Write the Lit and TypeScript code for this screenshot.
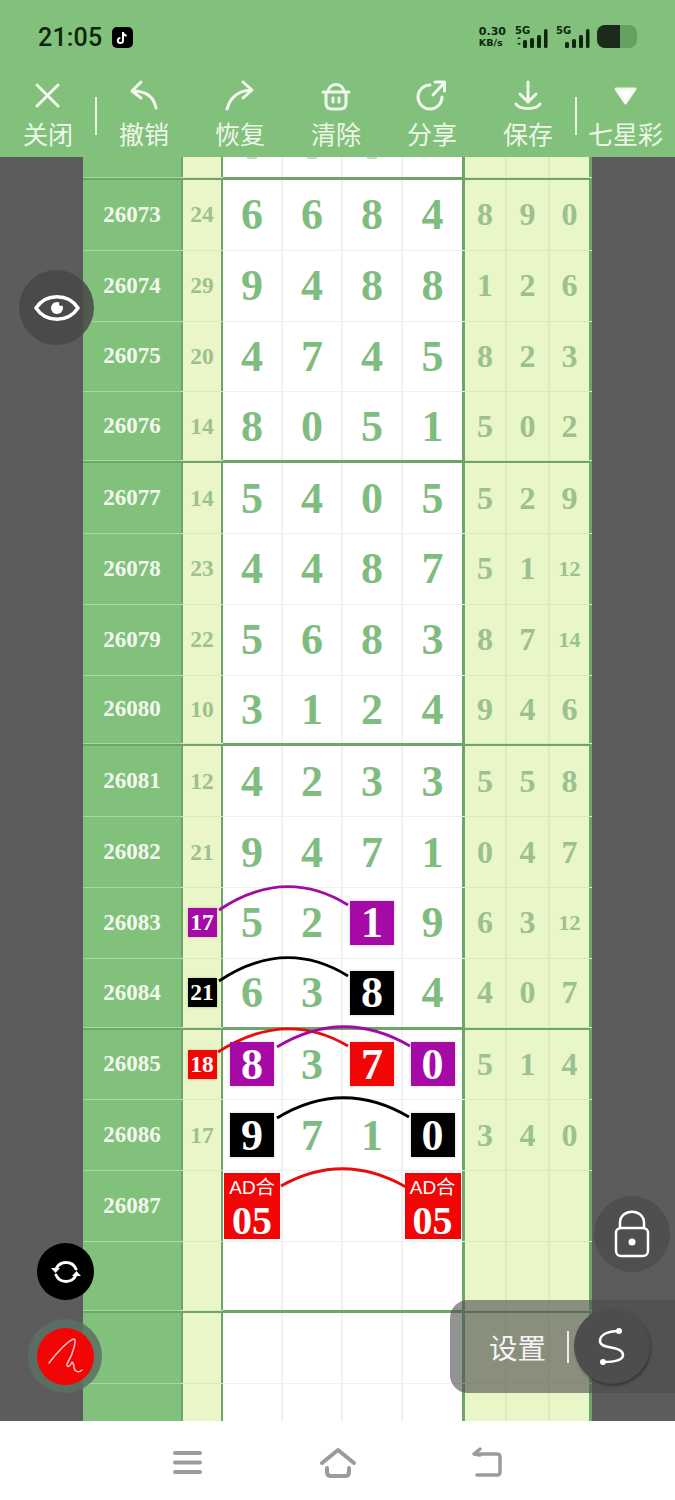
import { LitElement, css, html, svg } from "lit";
import { customElement } from "lit/decorators.js";

type Mark = "" | "p" | "k" | "r";
type Row = { no: string; sum: string; main: string[]; extra: string[]; sumMark?: Mark; marks?: Mark[]; ad?: boolean };

const rows: Row[] = [
  { no: "26073", sum: "24", main: ["6", "6", "8", "4"], extra: ["8", "9", "0"] },
  { no: "26074", sum: "29", main: ["9", "4", "8", "8"], extra: ["1", "2", "6"] },
  { no: "26075", sum: "20", main: ["4", "7", "4", "5"], extra: ["8", "2", "3"] },
  { no: "26076", sum: "14", main: ["8", "0", "5", "1"], extra: ["5", "0", "2"] },
  { no: "26077", sum: "14", main: ["5", "4", "0", "5"], extra: ["5", "2", "9"] },
  { no: "26078", sum: "23", main: ["4", "4", "8", "7"], extra: ["5", "1", "12"] },
  { no: "26079", sum: "22", main: ["5", "6", "8", "3"], extra: ["8", "7", "14"] },
  { no: "26080", sum: "10", main: ["3", "1", "2", "4"], extra: ["9", "4", "6"] },
  { no: "26081", sum: "12", main: ["4", "2", "3", "3"], extra: ["5", "5", "8"] },
  { no: "26082", sum: "21", main: ["9", "4", "7", "1"], extra: ["0", "4", "7"] },
  { no: "26083", sum: "17", sumMark: "p", main: ["5", "2", "1", "9"], marks: ["", "", "p", ""], extra: ["6", "3", "12"] },
  { no: "26084", sum: "21", sumMark: "k", main: ["6", "3", "8", "4"], marks: ["", "", "k", ""], extra: ["4", "0", "7"] },
  { no: "26085", sum: "18", sumMark: "r", main: ["8", "3", "7", "0"], marks: ["p", "", "r", "p"], extra: ["5", "1", "4"] },
  { no: "26086", sum: "17", main: ["9", "7", "1", "0"], marks: ["k", "", "", "k"], extra: ["3", "4", "0"] },
  { no: "26087", sum: "", main: ["05", "", "", "05"], ad: true, extra: ["", "", ""] },
  { no: "", sum: "", main: ["", "", "", ""], extra: ["", "", ""] },
  { no: "", sum: "", main: ["", "", "", ""], extra: ["", "", ""] },
  { no: "", sum: "", main: ["", "", "", ""], extra: ["", "", ""] },
];

// arcs joining the marked numbers, in page coordinates
const arcs = [
  { d: "M219 910 Q285 866 348 905", c: "#a30aa3" },
  { d: "M219 981 Q285 937 348 976", c: "#000" },
  { d: "M218 1052 Q285 1009 348 1046", c: "#e80c0c" },
  { d: "M277 1047 Q343 1007 410 1046", c: "#a30aa3" },
  { d: "M277 1118 Q343 1078 409 1117", c: "#000" },
  { d: "M281 1186 Q343 1151 406 1187", c: "#e80c0c" },
];

const tools = [
  { label: "关闭", icon: svg`<path d="M6 6 27 27M27 6 6 27"/>` },
  { label: "撤销", icon: svg`<path d="M29 29C27 19 20 12 6 12M14 3 5 12l9 7"/>`, sep: true },
  { label: "恢复", icon: svg`<path d="M4 30C7 19 14 12 28 11M20 3l9 8-9 8"/>` },
  { label: "清除", icon: svg`<path d="M4 13h26M7 13v11q0 6 6 6h8q6 0 6-6V13M9 13C10 3 24 3 25 13M14 19v4M20 19v4"/>` },
  { label: "分享", icon: svg`<path d="M27 18A12 12 0 1 1 15 6M18 16 29 4M20 3h9.5v9"/>` },
  { label: "保存", icon: svg`<path d="M17 3v19M9 15l8 8 8-8M5 25c4 6 20 6 24 0"/>` },
  { label: "七星彩", icon: svg`<path d="M7 10h19L16.5 24Z" fill="#fff" stroke-linejoin="round"/>`, sep: true },
];

@customElement("app-root")
export class AppRoot extends LitElement {
  static styles = css`
    :host {
      display: block;
      width: 675px;
      height: 1500px;
      position: relative;
      overflow: hidden;
      background: #fff;
      font-family: "Liberation Serif", serif;
    }
    .top {
      height: 157px;
      background: #82c17b;
      display: flex;
      flex-direction: column;
    }
    .status {
      height: 74px;
      display: flex;
      align-items: center;
      padding: 0 37px 0 38px;
      color: #0d260d;
    }
    .time {
      font: 500 25px Roboto, sans-serif;
      letter-spacing: 0.2px;
    }
    .tiktok {
      margin-left: 10px;
      width: 21px;
      height: 21px;
    }
    .right {
      margin-left: auto;
      display: flex;
      align-items: center;
    }
    .speed {
      font: 700 11px/11px "DejaVu Sans", sans-serif;
      text-align: left;
      margin-right: 9px;
    }
    .speed span {
      display: block;
      font-size: 9.5px;
    }
    .net {
      width: 34px;
      height: 24px;
      margin-right: 7px;
    }
    .batt {
      width: 41px;
      height: 24px;
    }
    .tools {
      display: flex;
      height: 83px;
    }
    .tool {
      width: 96px;
      display: flex;
      flex-direction: column;
      align-items: center;
      color: #eef7ea;
      font: 400 25px/34px "Noto Sans CJK SC", sans-serif;
    }
    .tool svg {
      width: 34px;
      height: 34px;
      margin-top: 5px;
      margin-bottom: 3px;
      fill: none;
      stroke: #f1f8ee;
      stroke-width: 3;
      stroke-linecap: round;
      stroke-linejoin: round;
    }
    .sep {
      width: 2px;
      height: 38px;
      margin: 23px -1px 0;
      background: #e8f4e4;
    }
    .tool.last {
      width: 99px;
    }
    .main {
      height: 1264px;
      background: #5c5c5c;
      padding: 0 83px;
      position: relative;
      overflow: hidden;
    }
    .row {
      display: grid;
      grid-template-columns: 98px 42px 60px 60px 60px 62px 42px 43px 42px;
      height: 70.8px;
      box-sizing: border-box;
      border-bottom: 1px solid #efefef;
    }
    .row.major {
      border-bottom: 3px solid #6fa56a;
    }
    .row.stub {
      height: 23px;
    }
    .tick {
      width: 10px;
      height: 2px;
      background: #c4dcc2;
      align-self: flex-start;
    }
    .cell {
      display: flex;
      align-items: center;
      justify-content: center;
      box-sizing: border-box;
    }
    .no {
      background: #82c17b;
      color: #f2f8ee;
      font-weight: 700;
      font-size: 23px;
      box-shadow: 0 1px 0 #a8d8a2;
    }
    .sum {
      background: #ebf6c8;
      border-left: 2px solid #6fa56a;
      border-right: 2px solid #6fa56a;
      color: #9cc08e;
      font-weight: 700;
      font-size: 23.5px;
      box-shadow: 0 1px 0 #dde9bd;
    }
    .num {
      background: #fff;
      color: #7fbc7f;
      font-weight: 700;
      font-size: 44px;
      border-right: 2px solid #f0f0f0;
    }
    .num.end {
      border-right: 3px solid #6fa56a;
    }
    .more {
      background: #e9f6c8;
      color: #9cc08e;
      font-weight: 700;
      font-size: 32px;
      border-right: 2px solid #dcebb8;
      box-shadow: 0 1px 0 #dce9bb;
    }
    .more.small {
      font-size: 22px;
    }
    .more.end {
      border-right: 3px solid #6fa56a;
    }
    .box {
      position: relative;
      z-index: 2;
      width: 44px;
      height: 44px;
      display: flex;
      align-items: center;
      justify-content: center;
      color: #fff;
      box-shadow: 0 0 3px rgba(0, 0, 0, 0.2);
    }
    .box.tiny {
      width: 29px;
      height: 29px;
    }
    .p {
      background: #a60aa6;
    }
    .k {
      background: #000;
    }
    .r {
      background: #f20505;
    }
    .ad {
      position: relative;
      z-index: 2;
      flex: none;
      width: 56px;
      height: 66px;
      background: #f20505;
      color: #fff;
      display: flex;
      flex-direction: column;
      align-items: center;
      font-size: 40px;
      line-height: 40px;
    }
    .ad span {
      font: 400 19px/26px "Liberation Sans", "Noto Sans CJK SC", sans-serif;
      margin-top: 2px;
    }
    .arcs {
      position: absolute;
      left: 0;
      top: -157px;
      width: 675px;
      height: 1500px;
      z-index: 1;
      fill: none;
      stroke-width: 2.8;
      pointer-events: none;
    }
    .nav {
      height: 79px;
      background: #fff;
    }
    .nav svg {
      display: block;
      width: 675px;
      height: 79px;
      fill: none;
      stroke: #9b9b9b;
      stroke-width: 4;
      stroke-linecap: round;
      stroke-linejoin: round;
    }
    .round {
      position: absolute;
      z-index: 5;
      border-radius: 50%;
      display: flex;
      align-items: center;
      justify-content: center;
      box-sizing: border-box;
    }
    .round svg {
      fill: none;
      stroke: #fff;
      stroke-linecap: round;
      stroke-linejoin: round;
    }
    .eye {
      left: 19px;
      top: 270px;
      width: 75px;
      height: 75px;
      background: rgba(70, 70, 70, 0.85);
    }
    .lock {
      left: 594px;
      top: 1196px;
      width: 76px;
      height: 76px;
      background: #4f4f4f;
    }
    .sync {
      left: 37px;
      top: 1243px;
      width: 57px;
      height: 57px;
      background: #000;
    }
    .pen {
      left: 28px;
      top: 1319px;
      width: 74px;
      height: 74px;
      background: rgba(90, 112, 100, 0.85);
    }
    .pen div {
      width: 57px;
      height: 57px;
      border-radius: 50%;
      background: #f20505;
      display: flex;
      align-items: center;
      justify-content: center;
    }
    .round.pen svg {
      stroke: #ffc8c8;
    }
    .panel {
      position: absolute;
      z-index: 4;
      left: 450px;
      top: 1300px;
      width: 225px;
      height: 93px;
      border-radius: 18px 0 0 18px;
      background: rgba(75, 75, 75, 0.6);
      display: flex;
      align-items: center;
      color: #f4f4f4;
      font: 400 28.5px "Noto Sans CJK SC", sans-serif;
      padding-left: 39px;
      box-sizing: border-box;
    }
    .panel i {
      width: 2px;
      height: 32px;
      margin-left: 21px;
      background: #ececec;
    }
    .swoosh {
      left: 574px;
      top: 1308px;
      width: 76px;
      height: 76px;
      background: #4d4d4d;
      box-shadow: 1px 2px 3px rgba(0, 0, 0, 0.35);
    }
  `;

  private number(value: string, r: Row, i: number) {
    const mark = r.marks?.[i];
    if (r.ad && value) return html`<div class="ad"><span>AD合</span>${value}</div>`;
    return mark ? html`<div class="box ${mark}">${value}</div>` : value;
  }

  private renderRow(r: Row, index: number) {
    return html`
      <div class="row ${index % 4 === 3 ? "major" : ""}">
        <div class="cell no">${r.no}</div>
        <div class="cell sum">
          ${r.sumMark ? html`<div class="box tiny ${r.sumMark}">${r.sum}</div>` : r.sum}
        </div>
        ${r.main.map((v, i) => html`<div class="cell num ${i === 3 ? "end" : ""}">${this.number(v, r, i)}</div>`)}
        ${r.extra.map(
          (v, i) => html`<div class="cell more ${v.length > 1 ? "small" : ""} ${i === 2 ? "end" : ""}">${v}</div>`
        )}
      </div>
    `;
  }

  // the row scrolled away under the toolbar: only the feet of its digits still show
  private renderStub() {
    return html`
      <div class="row major stub">
        <div class="cell no"></div>
        <div class="cell sum"></div>
        ${[0, 1, 2, 3].map(
          (i) => html`<div class="cell num ${i === 3 ? "end" : ""}">${i < 3 ? html`<div class="tick"></div>` : ""}</div>`
        )}
        ${[0, 1, 2].map((i) => html`<div class="cell more ${i === 2 ? "end" : ""}"></div>`)}
      </div>
    `;
  }

  render() {
    return html`
      <div class="top">
        <div class="status">
          <span class="time">21:05</span>
          <svg class="tiktok" viewBox="0 0 21 21">
            <rect width="21" height="21" rx="5" fill="#000"/>
            <path d="M11 5v8.5a2.6 2.6 0 1 1-2.6-2.6M11 5.5c.4 2 1.800 3 3.600 3.200" fill="none" stroke="#fff" stroke-width="2"/>
          </svg>
          <div class="right">
            <div class="speed">0.30<span>KB/s</span></div>
            <svg class="net" viewBox="0 0 34 24" fill="#0d260d">
              <text x="0" y="9" font-family="DejaVu Sans" font-weight="700" font-size="10">5G</text>
              <path d="M2 14l2-2 2 2ZM2 18h4l-2 2Z"/>
              <rect x="8" y="15" width="4" height="8" rx="1.500"/>
              <rect x="15" y="13" width="4" height="10" rx="1.500"/>
              <rect x="22" y="10" width="4" height="13" rx="1.500"/>
              <rect x="29" y="4" width="3.500" height="19" rx="1.500"/>
            </svg>
            <svg class="net" viewBox="0 0 34 24" fill="#0d260d">
              <text x="0" y="9" font-family="DejaVu Sans" font-weight="700" font-size="10">5G</text>
              <rect x="9" y="17" width="4" height="6" rx="1.500"/>
              <rect x="16" y="14" width="4" height="9" rx="1.500"/>
              <rect x="23" y="10" width="4" height="13" rx="1.500"/>
              <rect x="30" y="4" width="3.500" height="19" rx="1.500"/>
            </svg>
            <svg class="batt" viewBox="0 0 41 24">
              <rect width="40" height="23" rx="8" fill="#64a05f"/>
              <path d="M8 0h15v23H8a8 8 0 0 1-8-8V8a8 8 0 0 1 8-8Z" fill="#1b2a1b"/>
            </svg>
          </div>
        </div>
        <div class="tools">
          ${tools.map(
            (t, i) => html`
              ${t.sep ? html`<div class="sep"></div>` : ""}
              <div class="tool ${i === 6 ? "last" : ""}">
                <svg viewBox="0 0 34 34">${t.icon}</svg>
                ${t.label}
              </div>
            `
          )}
        </div>
      </div>
      <div class="main">
        ${this.renderStub()}
        ${rows.map((r, i) => this.renderRow(r, i))}
        <svg class="arcs" viewBox="0 0 675 1500">
          ${arcs.map((a) => svg`<path d=${a.d} stroke=${a.c}/>`)}
        </svg>
      </div>
      <div class="nav">
        <svg viewBox="0 0 675 79">
          <path d="M175 32h25M175 41.500h25M175 51h25"/>
          <path d="M322 42l16-13 16 13M327 47v4q0 4 4 4h14q4 0 4-4v-4"/>
          <path d="M475 33h22q3 0 3 3v15q0 3-3 3h-20M480 28l-6 5 6 1" stroke-width="3.500"/>
        </svg>
      </div>

      <div class="round eye">
        <svg width="46" height="32" viewBox="0 0 46 32" stroke-width="3.500">
          <path d="M2 16C12 1 34 1 44 16 34 31 12 31 2 16Z"/>
          <circle cx="23" cy="16" r="6" fill="#fff" stroke="none"/>
          <circle cx="27" cy="12" r="2" fill="#4a4a4a" stroke="none"/>
        </svg>
      </div>
      <div class="round lock">
        <svg width="36" height="48" viewBox="0 0 36 48" stroke-width="2.500">
          <path d="M6 18V13C6 -2 30 -2 30 13v5"/>
          <rect x="2" y="18" width="32" height="28" rx="5"/>
          <circle cx="18" cy="32" r="3.500" fill="#fff" stroke="none"/>
        </svg>
      </div>
      <div class="round sync">
        <svg width="30" height="26" viewBox="0 0 30 26" stroke-width="3">
          <path d="M25 10A11 11 0 0 0 5 10M5 16A11 11 0 0 0 25 16"/>
          <path d="M0 9h9l-4.500 5ZM21 17h9l-4.500-5Z" fill="#fff" stroke="none"/>
        </svg>
      </div>
      <div class="round pen">
        <div>
          <svg width="36" height="36" viewBox="0 0 36 36" stroke-width="1.500">
            <path d="M2 25C10 14 22 2 27 1 30 1 26 16 21 24 18 29 22 30 24 26 25 22 27 26 27 30 28 34 32 35 35 32"/>
          </svg>
        </div>
      </div>
      <div class="panel">设置<i></i></div>
      <div class="round swoosh">
        <svg width="30" height="40" viewBox="0 0 30 40" stroke-width="2.500">
          <path d="M22 5C10 5 3 9 3 15 3 24 26 19 26 29 26 35 15 36 6 36"/>
          <circle cx="22" cy="5" r="3" fill="#fff" stroke="none"/>
          <circle cx="6" cy="36" r="3" fill="#fff" stroke="none"/>
        </svg>
      </div>
    `;
  }
}
